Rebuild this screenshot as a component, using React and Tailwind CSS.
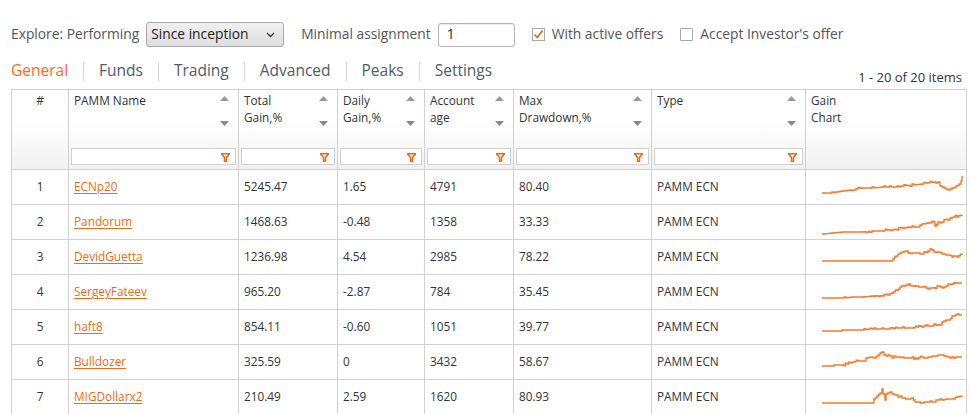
import React from "react";

const rows = [
  { n: 1, name: "ECNp20", total: "5245.47", daily: "1.65", age: "4791", dd: "80.40",
    pts: [[0,23],[10,23],[14,22],[20,21],[28,20],[32,19],[40,18],[50,18],[60,17],[75,17],[80,16],[90,15],[100,14],[104,13],[112,12],[114,14],[116,12],[118,16],[122,18],[126,20],[130,18],[134,17],[137,14],[139,12],[140,6]] },
  { n: 2, name: "Pandorum", total: "1468.63", daily: "-0.48", age: "1358", dd: "33.33",
    pts: [[0,29],[10,28],[20,27],[40,27],[50,26],[60,26],[65,25],[75,24],[82,23],[90,21],[96,21],[100,19],[106,18],[112,17],[113,21],[116,18],[120,16],[126,15],[128,13],[135,11],[140,10]] },
  { n: 3, name: "DevidGuetta", total: "1236.98", daily: "4.54", age: "2985", dd: "78.22",
    pts: [[0,21],[70,21],[71,18],[74,16],[78,14],[80,12],[84,11],[86,14],[90,13],[100,13],[106,12],[108,9],[112,13],[116,12],[120,15],[126,15],[130,16],[135,16],[140,15]] },
  { n: 4, name: "SergeyFateev", total: "965.20", daily: "-2.87", age: "784", dd: "35.45",
    pts: [[0,23],[22,23],[30,22],[40,22],[50,21],[55,22],[60,20],[66,19],[70,18],[75,14],[78,12],[82,11],[86,9],[90,10],[95,12],[100,12],[104,13],[110,13],[115,12],[122,12],[126,10],[130,9],[135,8],[140,8]] },
  { n: 5, name: "haft8", total: "854.11", daily: "-0.60", age: "1051", dd: "39.77",
    pts: [[0,21],[18,21],[20,20],[30,20],[40,20],[50,19],[60,19],[68,19],[75,18],[90,18],[95,17],[100,16],[110,16],[112,14],[118,15],[120,12],[124,10],[127,10],[130,7],[135,4],[137,5],[140,5]] },
  { n: 6, name: "Bulldozer", total: "325.59", daily: "0", age: "3432", dd: "58.67",
    pts: [[0,21],[10,21],[12,20],[20,20],[25,19],[30,17],[36,16],[42,16],[44,13],[48,12],[52,13],[56,10],[58,7],[60,7],[62,10],[66,10],[70,12],[76,12],[80,13],[90,13],[95,13],[100,12],[110,12],[112,10],[120,10],[122,11],[126,12],[140,12]] },
  { n: 7, name: "MIGDollarx2", total: "210.49", daily: "2.59", age: "1620", dd: "80.93",
    pts: [[0,23],[51,23],[52,19],[55,16],[58,13],[60,10],[61,14],[63,20],[64,14],[68,12],[70,14],[74,15],[78,17],[82,19],[87,19],[90,18],[93,22],[100,22],[112,22],[114,20],[120,20],[125,19],[130,19],[135,18],[140,17]] },
];

function jag(pts, seed) {
  let s = seed * 9301 + 49297;
  const rnd = () => { s = (s * 9301 + 49297) % 233280; return s / 233280; };
  const out = [];
  for (let i = 0; i < pts.length - 1; i++) {
    const [x0, y0] = pts[i];
    const [x1, y1] = pts[i + 1];
    const steps = Math.max(1, Math.round((x1 - x0) / 2));
    for (let k = 0; k < steps; k++) {
      const t = k / steps;
      const x = x0 + (x1 - x0) * t;
      let y = y0 + (y1 - y0) * t;
      const r = rnd();
      if (y1 !== y0 || x0 > 40) {
        if (r > 0.8) y -= 1;
        else if (r < 0.1) y += 1;
      }
      out.push([x, y]);
    }
  }
  out.push(pts[pts.length - 1]);
  const step = [];
  for (let i = 0; i < out.length; i++) {
    if (i > 0) step.push([out[i][0], out[i - 1][1]]);
    step.push(out[i]);
  }
  return step.map(([x, y]) => `${x.toFixed(1)},${y.toFixed(1)}`).join(" ");
}

const headers = [
  { l1: "PAMM Name", l2: "" },
  { l1: "Total", l2: "Gain,%" },
  { l1: "Daily", l2: "Gain,%" },
  { l1: "Account", l2: "age" },
  { l1: "Max", l2: "Drawdown,%" },
  { l1: "Type", l2: "" },
];

function Funnel() {
  return (
    <svg width="9" height="9" viewBox="0 0 9 9" className="absolute right-[5px] top-[4px]">
      <path d="M0.5 0.8 H8.5 L5.5 4.5 V8.5 H3.5 V4.5 Z" fill="none" stroke="#f26a10" strokeWidth="1.6" strokeLinejoin="miter" />
    </svg>
  );
}

function SortArrows() {
  return (
    <div className="absolute right-[9px] top-[6px] h-[32px] w-[9px]">
      <svg width="9" height="5" viewBox="0 0 9 5" className="absolute top-0 left-0">
        <path d="M0 5 L4.5 0 L9 5 Z" fill="#999" />
      </svg>
      <svg width="9" height="5" viewBox="0 0 9 5" className="absolute top-[25px] left-0">
        <path d="M0 0 L9 0 L4.5 5 Z" fill="#888" />
      </svg>
    </div>
  );
}

export default function App() {
  const font = { fontFamily: "'Open Sans', 'Noto Sans', sans-serif" };
  return (
    <div className="w-[970px] h-[414px] overflow-hidden bg-white pl-[11px] pr-[4px]" style={font}>
      <div className="flex items-center h-[25px] mt-[22px] text-[13.8px] text-[#555]">
        <span>Explore: Performing</span>
        <div className="ml-[7px] w-[138px] h-[25px] rounded-[3px] border border-[#a9a9a9] bg-gradient-to-b from-[#f0f0f0] to-[#dedede] flex items-center justify-between pl-[4px] pr-[8px] text-[#222]">
          <span>Since inception</span>
          <svg width="9" height="6" viewBox="0 0 9 6"><path d="M1 1 L4.5 4.5 L8 1" fill="none" stroke="#333" strokeWidth="1.3" /></svg>
        </div>
        <span className="ml-[17px]">Minimal assignment</span>
        <div className="ml-[7px] w-[77px] h-[24px] rounded-[3px] border border-[#b5b5b5] bg-white flex items-center pl-[8px] text-[#222] shadow-[inset_0_1px_1px_rgba(0,0,0,0.08)]">1</div>
        <div className="ml-[17px] w-[13px] h-[13px] border border-[#a8a8a8] bg-white flex items-center justify-center">
          <svg width="11" height="11" viewBox="0 0 11 11"><path d="M1.5 5.5 L4.2 8.5 L9.5 1.5" fill="none" stroke="#f2600c" strokeWidth="1.6" /></svg>
        </div>
        <span className="ml-[7px]">With active offers</span>
        <div className="ml-[17px] w-[13px] h-[13px] border border-[#a8a8a8] bg-white rounded-[1px]" />
        <span className="ml-[7px]">Accept Investor's offer</span>
      </div>

      <div className="flex items-end justify-between h-[42px]">
        <div className="flex items-center h-[20px] mb-[8px] text-[15.5px] text-[#4f5b66]">
          <span className="text-[#ff6a1a]">General</span>
          <span className="mx-[15px] w-px h-[19px] bg-[#d4d4d4]" />
          <span>Funds</span>
          <span className="mx-[15px] w-px h-[19px] bg-[#d4d4d4]" />
          <span>Trading</span>
          <span className="mx-[15px] w-px h-[19px] bg-[#d4d4d4]" />
          <span>Advanced</span>
          <span className="mx-[15px] w-px h-[19px] bg-[#d4d4d4]" />
          <span>Peaks</span>
          <span className="mx-[15px] w-px h-[19px] bg-[#d4d4d4]" />
          <span>Settings</span>
        </div>
        <div className="mb-[2px] mr-[4px] text-[13px] text-[#333]">1 - 20 of 20 items</div>
      </div>

      <table className="table-fixed border-collapse w-[955px] text-[11.8px] text-[#333]">
        <colgroup>
          <col className="w-[57px]" />
          <col className="w-[170px]" />
          <col className="w-[99px]" />
          <col className="w-[87px]" />
          <col className="w-[89px]" />
          <col className="w-[138px]" />
          <col className="w-[154px]" />
          <col className="w-[161px]" />
        </colgroup>
        <thead>
          <tr className="h-[80px] bg-gradient-to-b from-white from-40% to-[#f1f1f1]">
            <th className="border border-[#d0d0d0] align-top pt-[2px] font-normal text-center">#</th>
            {headers.map((h, i) => (
              <th key={i} className="border border-[#d0d0d0] align-top font-normal text-left p-0 relative">
                <div className="pl-[5px] pt-[2px] leading-[17px] h-[58px]">
                  <div>{h.l1}</div>
                  {h.l2 && <div>{h.l2}</div>}
                </div>
                <SortArrows />
                <div className="relative mx-[2px] mb-[3px] h-[17px] border border-[#d0d0d0] bg-white">
                  <Funnel />
                </div>
              </th>
            ))}
            <th className="border border-[#d0d0d0] align-top font-normal text-left p-0">
              <div className="pl-[5px] pt-[2px] leading-[17px]">
                <div>Gain</div>
                <div>Chart</div>
              </div>
            </th>
          </tr>
        </thead>
        <tbody>
          {rows.map((r) => (
            <tr key={r.n} className="h-[35px]">
              <td className="border border-[#d0d0d0] text-center">{r.n}</td>
              <td className="border border-[#d0d0d0] pl-[5px]">
                <a className="text-[#f26a10] underline underline-offset-2">{r.name}</a>
              </td>
              <td className="border border-[#d0d0d0] pl-[5px]">{r.total}</td>
              <td className="border border-[#d0d0d0] pl-[5px]">{r.daily}</td>
              <td className="border border-[#d0d0d0] pl-[5px]">{r.age}</td>
              <td className="border border-[#d0d0d0] pl-[5px]">{r.dd}</td>
              <td className="border border-[#d0d0d0] pl-[5px]">PAMM ECN</td>
              <td className="border border-[#d0d0d0] p-0">
                <svg width="150" height="34" viewBox="-1 0 150 34" className="block ml-[15px]">
                  <polyline points={jag(r.pts, r.n)} fill="none" stroke="#f67a2a" strokeWidth="1.4" />
                </svg>
              </td>
            </tr>
          ))}
        </tbody>
      </table>
    </div>
  );
}
